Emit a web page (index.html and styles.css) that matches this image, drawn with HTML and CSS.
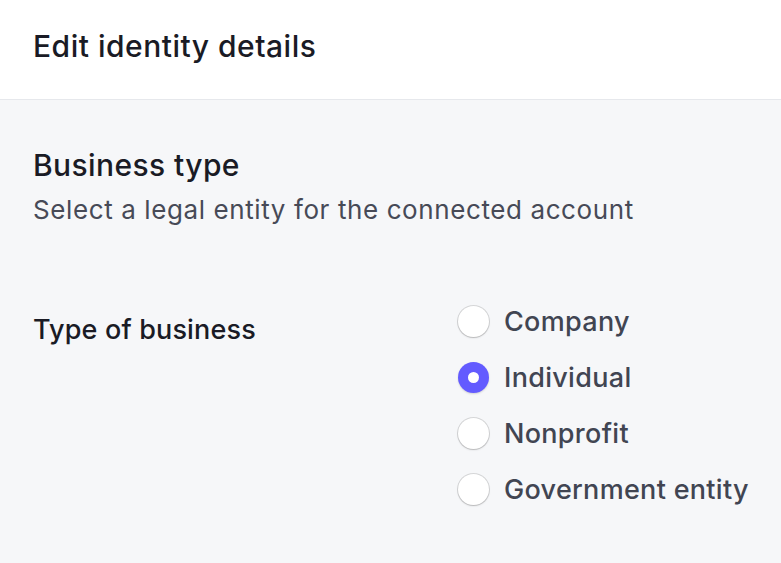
FILE: index.html
```html
<!DOCTYPE html>
<html>
<head>
<meta charset="utf-8">
<link rel="stylesheet" href="styles.css">
</head>
<body>
<div class="header"><h1 class="title">Edit identity details</h1></div>
<div class="content">
  <h2 class="section-title">Business type</h2>
  <p class="section-desc">Select a legal entity for the connected account</p>
  <div class="field">
    <div class="field-label">Type of business</div>
    <div class="options">
      <label class="option"><span class="radio"></span><span class="option-text">Company</span></label>
      <label class="option"><span class="radio checked"></span><span class="option-text">Individual</span></label>
      <label class="option"><span class="radio"></span><span class="option-text">Nonprofit</span></label>
      <label class="option"><span class="radio"></span><span class="option-text">Government entity</span></label>
    </div>
  </div>
</div>
</body>
</html>
```
FILE: styles.css
```css
html, body { margin: 0; padding: 0; height: 100%; }
body { font-family: Inter, "Noto Sans", sans-serif; background: #f6f7f9; color: #1a1b25; }
.header { background: #fff; border-bottom: 1px solid #e6e8ec; padding: 28px 33px 0; box-sizing: border-box; height: 100px; }
.title { margin: 0; font-size: 30px; line-height: 36px; font-weight: 500; color: #1a1b25; letter-spacing: 0.5px; }
.content { padding: 47px 0 0 33px; }
.section-title { margin: 0; font-size: 30px; font-weight: 500; line-height: 36px; letter-spacing: 0.4px; }
.section-desc { margin: 11px 0 0; font-size: 26px; color: #474a57; line-height: 32px; letter-spacing: 0.6px; white-space: nowrap; }
.field { display: flex; margin-top: 80px; }
.field-label { flex: none; width: 425px; font-size: 27px; font-weight: 500; line-height: 32px; padding-top: 8px; letter-spacing: 0.15px; }
.options { display: flex; flex-direction: column; gap: 24px; }
.option { display: flex; align-items: center; gap: 15px; height: 32px; white-space: nowrap; }
.radio { width: 31px; height: 31px; border-radius: 50%; background: #fff; box-shadow: 0 0 0 1px rgba(0,0,0,0.13), 0 1px 2px rgba(0,0,0,0.15); flex: none; margin-top: -2px; }
.radio.checked { background: #635bff; display: flex; align-items: center; justify-content: center; box-shadow: 0 1px 2px rgba(0,0,0,0.15); }
.radio.checked::after { content: ""; width: 11px; height: 11px; border-radius: 50%; background: #fff; }
.option-text { font-size: 27px; line-height: 32px; color: #414552; font-weight: 500; letter-spacing: 0.3px; }
```
